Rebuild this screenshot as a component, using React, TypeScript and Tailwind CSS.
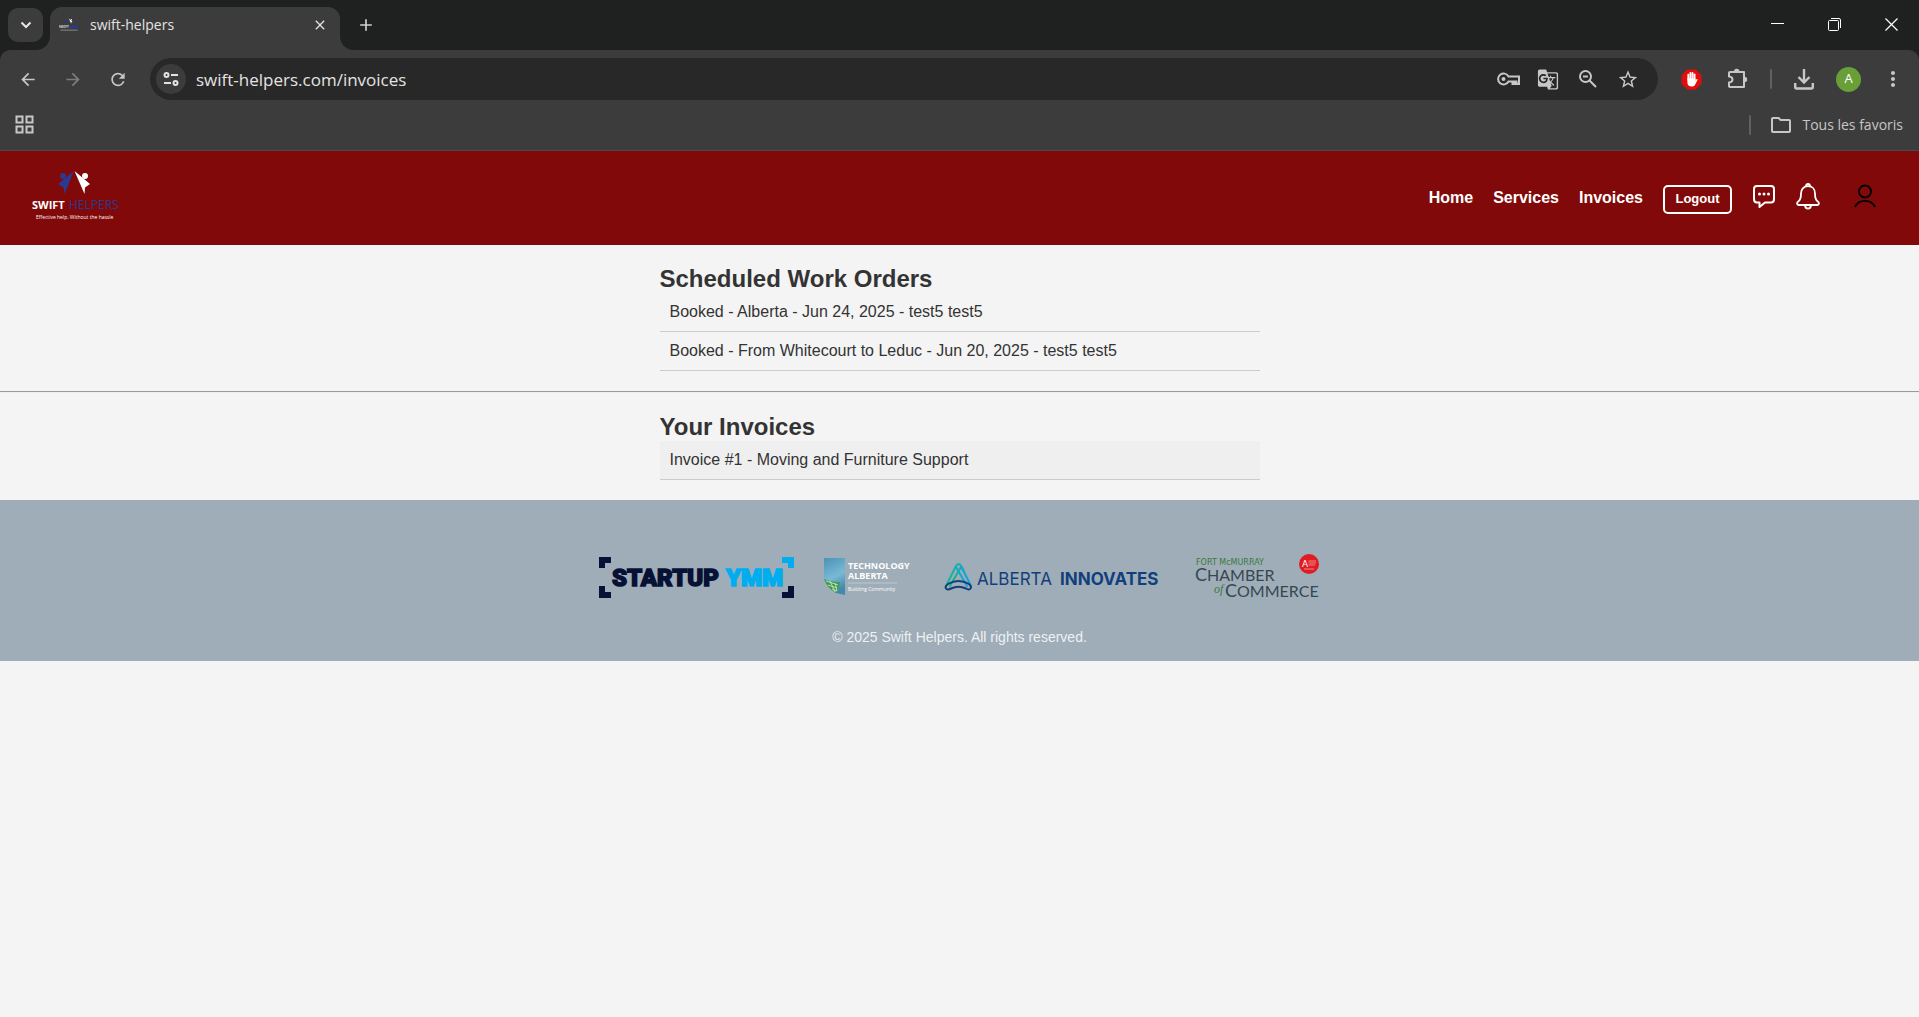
import type { ReactNode } from 'react';
import {
  MdArrowBack,
  MdArrowForward,
  MdRefresh,
  MdClose,
  MdAdd,
  MdStarBorder,
  MdMoreVert,
  MdOutlineFolder,
  MdGTranslate,
} from 'react-icons/md';

function IconButton({ label, className, children }: { label: string; className?: string; children: ReactNode }) {
  return (
    <button type="button" aria-label={label} className={`flex shrink-0 items-center justify-center ${className ?? ''}`}>
      {children}
    </button>
  );
}

function HelpersMark() {
  return (
    <>
      <circle cx="31" cy="5" r="3" fill="#2b3990" />
      <path d="M42 0 L32.500 23 L31.500 16.500 L26 13 Z" fill="#2b3990" />
      <circle cx="53" cy="5" r="3" fill="#ffffff" />
      <path d="M42.500 0 L52.500 23 L53 16.500 L58 13 Z" fill="#ffffff" />
    </>
  );
}

function SwiftLogo() {
  return (
    <svg width="86" height="52" viewBox="0 0 86 52" role="img" aria-label="Swift Helpers">
      <HelpersMark />
      <text x="0" y="38" fontFamily="Open Sans, sans-serif" fontWeight="700" fontSize="11" fill="#ffffff">SWIFT</text>
      <text x="37" y="38" fontFamily="Open Sans, sans-serif" fontWeight="500" fontSize="12" fill="#2b3990">HELPERS</text>
      <text x="4" y="48" fontFamily="Open Sans, sans-serif" fontWeight="500" fontSize="5" fill="#ffffff">Effective help. Without the hassle</text>
    </svg>
  );
}

function Favicon() {
  return (
    <svg width="20" height="18" viewBox="0 0 86 56" aria-hidden="true">
      <HelpersMark />
      <text x="0" y="42" fontFamily="Noto Sans, sans-serif" fontWeight="700" fontSize="14" fill="#d8d8d8">SWIFT</text>
      <rect x="46" y="31" width="38" height="11" fill="#2b3990" />
      <rect x="6" y="48" width="74" height="4" fill="#8c8c8c" />
    </svg>
  );
}

function TabStrip() {
  return (
    <div className="flex h-[50px] items-end bg-[#1f2120]">
      <div className="flex h-[50px] w-[50px] items-center pl-2">
        <IconButton label="Search tabs" className="h-[34px] w-[35px] rounded-[10px] bg-[#3c3c3c]">
          <svg width="12" height="8" viewBox="0 0 12 8" fill="none" stroke="#e6e6e6" strokeWidth="2">
            <path d="M1.500 1.500 L6 6 L10.500 1.500" />
          </svg>
        </IconButton>
      </div>
      <div className="relative flex h-[43px] w-[290px] items-center rounded-t-[12px] bg-[#3c3c3c] pr-3 pb-[7px] pl-[9px]">
        <svg className="absolute bottom-0 -left-[14px]" width="14" height="14" viewBox="0 0 14 14">
          <path d="M14 0 V14 H0 A14 14 0 0 0 14 0 Z" fill="#3c3c3c" />
        </svg>
        <svg className="absolute -right-[14px] bottom-0" width="14" height="14" viewBox="0 0 14 14">
          <path d="M0 0 V14 H14 A14 14 0 0 1 0 0 Z" fill="#3c3c3c" />
        </svg>
        <Favicon />
        <span className="ml-[11px] flex-1 text-[14px] leading-5 text-[#e3e3e3]">swift-helpers</span>
        <IconButton label="Close tab" className="size-4 text-[#e3e3e3]">
          <MdClose size={16} />
        </IconButton>
      </div>
      <IconButton label="New tab" className="mb-[15px] ml-4 size-5 text-[#d0d0d0]">
        <MdAdd size={20} />
      </IconButton>
      <div className="flex h-[50px] flex-1 items-center justify-end gap-11 pr-[21px] pb-[2px] text-white">
        <IconButton label="Minimize" className="size-[13px]">
          <svg width="13" height="13" viewBox="0 0 13 13"><path d="M0 5.500 H13" stroke="currentColor" /></svg>
        </IconButton>
        <IconButton label="Restore" className="size-[13px]">
          <svg width="13" height="13" viewBox="0 0 13 13" fill="none" stroke="currentColor">
            <rect x="0.500" y="2.500" width="10" height="10" rx="1" />
            <path d="M3 0.500 H11 Q12.500 0.500 12.500 2 V10" />
          </svg>
        </IconButton>
        <IconButton label="Close" className="size-[13px]">
          <svg width="13" height="13" viewBox="0 0 13 13" fill="none" stroke="currentColor" strokeWidth="1.200">
            <path d="M0.500 0.500 L12.500 12.500 M12.500 0.500 L0.500 12.500" />
          </svg>
        </IconButton>
      </div>
    </div>
  );
}

function Toolbar() {
  return (
    <div className="flex h-[58px] items-center rounded-t-[10px] bg-[#3c3c3c] text-[#c7c7c7]">
      <div className="flex w-[150px] items-center gap-[25px] pl-[18px]">
        <IconButton label="Back" className="size-5"><MdArrowBack size={21} /></IconButton>
        <IconButton label="Forward" className="size-5 text-[#7c7c7c]"><MdArrowForward size={21} /></IconButton>
        <IconButton label="Reload" className="size-5"><MdRefresh size={23} /></IconButton>
      </div>
      <div className="flex h-[42px] flex-1 items-center rounded-full bg-[#282828] pr-[19px] pl-[6px]">
        <IconButton label="Site information" className="size-[30px] rounded-full bg-[#3c3c3c]">
          <svg width="16" height="14" viewBox="0 0 16 14" fill="none" stroke="#e3e3e3" strokeWidth="2">
            <circle cx="3.500" cy="3" r="2" />
            <path d="M8 3 H15 M1 11 H8" />
            <circle cx="12.500" cy="11" r="2" />
          </svg>
        </IconButton>
        <input
          aria-label="Address"
          defaultValue="swift-helpers.com/invoices"
          className="ml-[10px] h-[30px] min-w-0 flex-1 bg-transparent text-[17px] text-[#e3e3e3] outline-none"
        />
        <div className="flex items-center gap-[18px]">
          <IconButton label="Passwords" className="size-[22px]">
            <svg width="23" height="14" viewBox="0 0 23 14" fill="none" stroke="currentColor" strokeWidth="2" className="shrink-0">
              <path d="M11.500 4.500 A5.500 5.500 0 1 0 11.500 9.500 H15.500 V12 H17.500 V9.500 H19.500 V12 H22 V4.500 Z" />
              <circle cx="6.500" cy="7" r="2" fill="currentColor" stroke="none" />
            </svg>
          </IconButton>
          <IconButton label="Translate" className="size-[22px]"><MdGTranslate size={23} /></IconButton>
          <IconButton label="Zoom" className="size-[22px]">
            <svg width="18" height="18" viewBox="0 0 18 18" fill="none" stroke="currentColor" strokeWidth="2">
              <circle cx="6.500" cy="6.500" r="5.500" />
              <path d="M10.500 10.500 L17 17 M4 6.500 H9" />
            </svg>
          </IconButton>
          <IconButton label="Bookmark this page" className="size-[22px]"><MdStarBorder size={23} /></IconButton>
        </div>
      </div>
      <div className="flex items-center pr-[14px] pl-[23px]">
        <IconButton label="Ad blocker" className="size-[21px]">
          <svg width="21" height="21" viewBox="0 0 21 21">
            <path d="M6.300 0.500 H14.700 L20.500 6.300 V14.700 L14.700 20.500 H6.300 L0.500 14.700 V6.300 Z" fill="#e40d0d" />
            <g stroke="#ffffff" strokeWidth="1.800" strokeLinecap="round" fill="none">
              <path d="M7.300 11 V5.600 M9.400 10 V3.900 M11.500 10 V3.900 M13.600 11 V5.400" />
            </g>
            <path d="M6.400 9.500 H14.500 V12 L15.600 10 Q16.600 9.600 16.700 10.500 L14 16 Q12.900 17.500 11 17.500 Q6.400 17.500 6.400 13.500 Z" fill="#ffffff" />
          </svg>
        </IconButton>
        <IconButton label="Extensions" className="ml-6 size-6">
          <svg width="22" height="22" viewBox="0 0 22 22">
            <path
              d="M3 4 H17 V19 H3 Q2 19 2 18 V14.500 Q5.500 14.200 5.500 11.500 Q5.500 8.800 2 8.500 V5 Q2 4 3 4 Z"
              fill="none"
              stroke="currentColor"
              strokeWidth="2"
              strokeLinejoin="round"
            />
            <path d="M7 3.500 A2.700 2.700 0 0 1 12.400 3.500 Z M17.500 8.800 A2.700 2.700 0 0 1 17.500 14.200 Z" fill="currentColor" />
          </svg>
        </IconButton>
        <span className="ml-5 h-5 w-[2px] rounded-full bg-[#606060]" />
        <IconButton label="Downloads" className="ml-5 size-6">
          <svg width="20" height="21" viewBox="0 0 20 21" fill="none" stroke="currentColor" strokeWidth="2.400">
            <path d="M10 0 V13 M4.500 8 L10 13.500 L15.500 8 M1.200 14 V18 Q1.200 19.500 2.700 19.500 H17.300 Q18.800 19.500 18.800 18 V14" />
          </svg>
        </IconButton>
        <IconButton label="Account" className="ml-5 size-[25px] rounded-full bg-[#689f38] text-[13px] text-white">A</IconButton>
        <IconButton label="Menu" className="ml-5 size-6"><MdMoreVert size={26} /></IconButton>
      </div>
    </div>
  );
}

function BookmarksBar() {
  return (
    <div className="flex h-[43px] items-center justify-between border-b border-[#4b4b4b] bg-[#3c3c3c] pr-4 pb-[9px] pl-[15px] text-[#c7c7c7]">
      <IconButton label="Apps" className="size-[19px]">
        <svg width="19" height="19" viewBox="0 0 19 19" fill="none" stroke="currentColor" strokeWidth="2">
          <rect x="1.500" y="1.500" width="6" height="6" />
          <rect x="11.500" y="1.500" width="6" height="6" />
          <rect x="1.500" y="11.500" width="6" height="6" />
          <rect x="11.500" y="11.500" width="6" height="6" />
        </svg>
      </IconButton>
      <div className="flex items-center">
        <span className="h-5 w-[2px] rounded-full bg-[#606060]" />
        <button type="button" className="ml-[18px] flex items-center gap-[9px] text-[14px] leading-5">
          <MdOutlineFolder size={24} />
          Tous les favoris
        </button>
      </div>
    </div>
  );
}

function SiteHeader() {
  return (
    <header className="flex h-[94px] items-center justify-between bg-[#820909] pr-[42px] pl-8 text-white">
      <a href="#home" className="mb-[2px] block">
        <SwiftLogo />
      </a>
      <nav className="flex items-center gap-5 text-[16px] leading-[18px] font-bold">
        <a href="#home">Home</a>
        <a href="#services">Services</a>
        <a href="#invoices">Invoices</a>
        <button type="button" className="mt-[2px] h-[29px] w-[69px] rounded-[5px] border-2 border-white text-[13px] leading-4 font-bold">
          Logout
        </button>
        <div className="flex items-center gap-5 pb-1">
          <IconButton label="Messages" className="size-6">
            <svg width="24" height="24" viewBox="0 0 24 24" fill="none" stroke="currentColor" strokeWidth="2">
              <path d="M5 2 H19 Q22 2 22 5 V15 Q22 18.500 19 18.500 H13 L7.500 23 V18.500 H5 Q2 18.500 2 15 V5 Q2 2 5 2 Z" strokeLinejoin="round" />
              <g fill="currentColor" stroke="none">
                <circle cx="7.500" cy="10" r="1.500" />
                <circle cx="12" cy="10" r="1.500" />
                <circle cx="16.500" cy="10" r="1.500" />
              </g>
            </svg>
          </IconButton>
          <IconButton label="Notifications" className="h-[27px] w-6">
            <svg width="24" height="27" viewBox="0 0 24 27" fill="none" stroke="currentColor" strokeWidth="1.800">
              <path d="M12 3.200 C7.500 3.200 5 6.500 5 10.500 C5 15.500 4.200 17.300 2.200 18.600 Q0.800 19.600 1.200 21 Q1.500 22 3 22 H21 Q22.500 22 22.800 21 Q23.200 19.600 21.800 18.600 C19.800 17.300 19 15.500 19 10.500 C19 6.500 16.500 3.200 12 3.200 Z" />
              <path d="M10 3.500 Q10 1 12 1 Q14 1 14 3.500 M9 22.500 Q9.500 25.600 12 25.600 Q14.500 25.600 15 22.500" />
            </svg>
          </IconButton>
          <IconButton label="Profile" className="ml-3 h-6 w-[25px] text-black">
            <svg width="22" height="24" viewBox="0 0 22 24" fill="none" stroke="currentColor" strokeWidth="1.800">
              <circle cx="11" cy="7.500" r="6" />
              <path d="M1 23 Q3.500 16.800 11 16.800 Q18.500 16.800 21 23" />
            </svg>
          </IconButton>
        </div>
      </nav>
    </header>
  );
}

function Section({ title, items, active }: { title: string; items: string[]; active?: boolean }) {
  return (
    <section className="mx-auto max-w-[600px] py-5">
      <h2 className="text-2xl leading-7 font-bold">{title}</h2>
      <ul>
        {items.map((item) => (
          <li key={item} className={`border-b border-[#cccccc] p-[10px] leading-[18px] ${active ? 'bg-[#efefef]' : ''}`}>
            {item}
          </li>
        ))}
      </ul>
    </section>
  );
}

function StartupLogo() {
  return (
    <svg width="195" height="42" viewBox="0 0 195 42" role="img" aria-label="Startup YMM">
      <path d="M0 1 H12 V7 H6 V12 H0 Z M0 30 H6 V36 H12 V42 H0 Z M189 30 H195 V42 H183 V36 H189 Z" fill="#071135" />
      <path d="M183 1 H195 V12 H189 V7 H183 Z" fill="#00aeef" />
      <g fontFamily="Roboto, sans-serif" fontWeight="900" fontSize="24" strokeWidth="1.500">
        <text x="13" y="30" fill="#071135" stroke="#071135">STARTUP</text>
        <text x="127" y="30" fill="#00aeef" stroke="#00aeef">YMM</text>
      </g>
    </svg>
  );
}

function TechnologyAlbertaLogo() {
  return (
    <svg width="90" height="38" viewBox="0 0 90 38" role="img" aria-label="Technology Alberta">
      <defs>
        <linearGradient id="sheet" x1="0" y1="0" x2="0.300" y2="1">
          <stop offset="0" stopColor="#4b92b4" />
          <stop offset="0.600" stopColor="#79b9d6" />
          <stop offset="1" stopColor="#4389aa" />
        </linearGradient>
      </defs>
      <path d="M0 0 H21 V37 L12 35 L0 21 Z" fill="url(#sheet)" />
      <path d="M0 21 Q8 25 16 24 Q15 31 12 35 Q3 30 0 21 Z" fill="#3f9a50" />
      <path d="M2 23 L14 27 M4 27 L13 30 M8 31 L13 33 M6 23 L11 34 M11 25 L13 33" stroke="#d7edc7" strokeWidth="0.800" />
      <g fontFamily="Open Sans, sans-serif" fill="#ffffff">
        <text x="24" y="11" fontWeight="700" fontSize="9">TECHNOLOGY</text>
        <text x="24" y="21" fontWeight="700" fontSize="9">ALBERTA</text>
        <text x="24" y="33" fontWeight="500" fontSize="5">Building Community</text>
      </g>
      <path d="M24 25 H73" stroke="#c4d0d8" strokeWidth="0.800" />
    </svg>
  );
}

function AlbertaInnovatesLogo() {
  return (
    <svg width="221" height="30" viewBox="0 0 221 30" role="img" aria-label="Alberta Innovates">
      <g fill="none" strokeWidth="2" strokeLinecap="round">
        <path d="M2 24 L12 4 Q14.500 0 17 4 L20 9" stroke="#13b5a0" />
        <path d="M6 24 L17 5" stroke="#13b58a" />
        <path d="M12 5 L23 24 M17 4 L27 24" stroke="#12a5d8" />
        <path d="M4 22 Q14.500 16 25 22 Q28.500 25 26 27 Q24.500 28 22 26.500 Q14.500 23 7 26.500 Q4 28 2.500 27 Q0 25 4 22 Z" stroke="#123f7c" />
      </g>
      <g fontFamily="Inter, sans-serif" fontSize="17" fill="#123f7c">
        <text x="33" y="23">ALBERTA</text>
        <text x="116" y="23" fontWeight="700">INNOVATES</text>
      </g>
    </svg>
  );
}

function ChamberLogo() {
  return (
    <svg width="126" height="50" viewBox="0 0 126 50" role="img" aria-label="Fort McMurray Chamber of Commerce">
      <text x="1" y="13" fontFamily="DejaVu Sans, sans-serif" fontSize="8" fill="#3b7a3c">FORT McMURRAY</text>
      <g fontFamily="Lato, sans-serif" fill="#37474f">
        <text x="0" y="29" fontSize="18">C<tspan fontSize="16">HAMBER</tspan></text>
        <text x="30" y="45" fontSize="18">C<tspan fontSize="16">OMMERCE</tspan></text>
      </g>
      <text x="19" y="41" fontFamily="Liberation Serif, serif" fontStyle="italic" fontSize="12" fill="#3b7a3c">of</text>
      <circle cx="114" cy="12" r="10" fill="#df1c24" />
      <text x="107" y="15" fontFamily="Lato, sans-serif" fontSize="9" fill="#ffffff">A</text>
      <path d="M113.500 9 H121 M113.500 11 H121 M113.500 13 H120 M109 17 H119" stroke="#f0848a" strokeWidth="1" />
    </svg>
  );
}

export default function App() {
  return (
    <div className="flex min-h-screen flex-col bg-[#f4f4f4]">
      <div className="bg-[#1f2120] font-['Open_Sans',sans-serif]">
        <TabStrip />
        <Toolbar />
        <BookmarksBar />
      </div>
      <div className="font-['Liberation_Sans',Arial,sans-serif] text-base text-[#333333]">
        <SiteHeader />
        <main>
          <Section
            title="Scheduled Work Orders"
            items={['Booked - Alberta - Jun 24, 2025 - test5 test5', 'Booked - From Whitecourt to Leduc - Jun 20, 2025 - test5 test5']}
          />
          <hr className="h-[2px] border-t border-b border-t-[#9a9a9a] border-b-[#eeeeee]" />
          <Section title="Your Invoices" items={['Invoice #1 - Moving and Furniture Support']} active />
        </main>
        <footer className="bg-[#9eadb8] px-5 pt-[52px] pb-4 text-center">
          <div className="flex flex-wrap items-center justify-center gap-[30px]">
            <StartupLogo />
            <TechnologyAlbertaLogo />
            <AlbertaInnovatesLogo />
            <ChamberLogo />
          </div>
          <p className="mt-[27px] text-sm leading-4 text-[#eef1f3]">© 2025 Swift Helpers. All rights reserved.</p>
        </footer>
      </div>
    </div>
  );
}
